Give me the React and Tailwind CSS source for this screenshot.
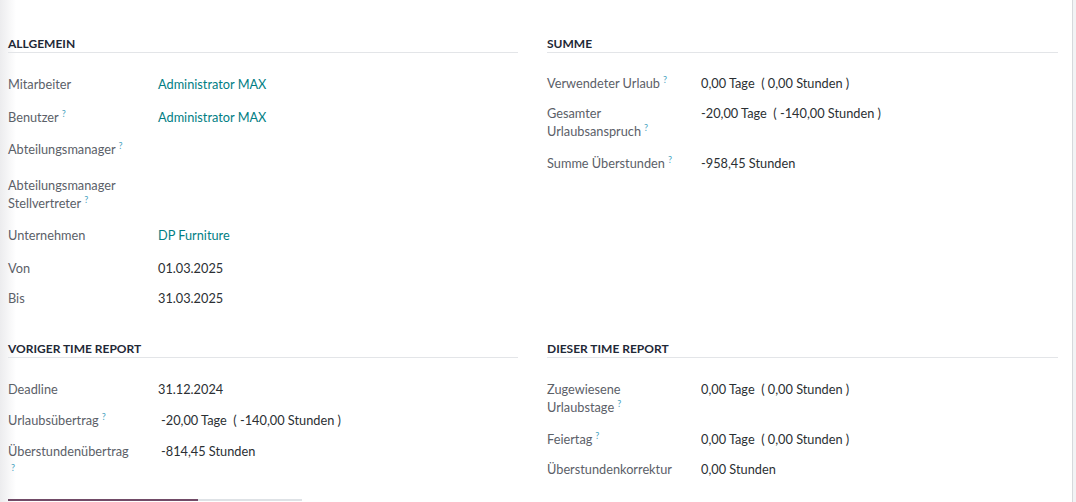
const FONT = { fontFamily: '"Lato", "Noto Sans", sans-serif' };

function Hint() {
  return <span className="relative -top-[5px] ml-[3px] text-[9px] leading-none text-[#4aa3bf]">?</span>;
}

function Header({ children }) {
  return (
    <div className="h-[18px] leading-[18px] text-[12px] font-bold text-[#1f2937] uppercase border-b border-[#e3e5e8]">
      {children}
    </div>
  );
}

function Row({ label, children, h, labelW = 'w-[150px]' }) {
  return (
    <div className={`flex ${h}`}>
      <div className={`${labelW} shrink-0 text-[#5b6068] leading-[18px]`}>{label}</div>
      <div className="text-[#2b2f33] leading-[18px] whitespace-pre">{children}</div>
    </div>
  );
}

function Link({ children }) {
  return <span className="text-[#017e84]">{children}</span>;
}

export default function App() {
  return (
    <div className="min-h-screen flex bg-[#f2f3f5] text-[12.75px]" style={FONT}>
      <div className="w-[1073px] min-h-screen border-r border-[#d6d8dc] bg-[linear-gradient(to_right,#ececee,#ffffff_16px)]">
        <div className="grid grid-cols-[510px_511px] gap-x-[29px] pl-2">
          {/* Allgemein */}
          <div className="pt-[35px]">
            <Header>Allgemein</Header>
            <div className="pt-[22px]">
              <Row label="Mitarbeiter" h="h-[33px]">
                <Link>Administrator MAX</Link>
              </Row>
              <Row label={<>Benutzer<Hint /></>} h="h-[32px]">
                <Link>Administrator MAX</Link>
              </Row>
              <Row label={<>Abteilungsmanager<Hint /></>} h="h-[36px]" />
              <Row label={<>Abteilungsmanager<br />Stellvertreter<Hint /></>} h="h-[50px]" />
              <Row label="Unternehmen" h="h-[33px]">
                <Link>DP Furniture</Link>
              </Row>
              <Row label="Von" h="h-[30px]">01.03.2025</Row>
              <Row label="Bis" h="h-[30px]">31.03.2025</Row>
            </div>
          </div>

          {/* Summe */}
          <div className="pt-[35px]">
            <Header>Summe</Header>
            <div className="pt-[21px]">
              <Row label={<>Verwendeter Urlaub<Hint /></>} h="h-[30px]" labelW="w-[154px]">
                0,00 Tage  ( 0,00 Stunden )
              </Row>
              <Row label={<>Gesamter<br />Urlaubsanspruch<Hint /></>} h="h-[50px]" labelW="w-[154px]">
                -20,00 Tage  ( -140,00 Stunden )
              </Row>
              <Row label={<>Summe Überstunden<Hint /></>} h="h-[30px]" labelW="w-[154px]">
                -958,45 Stunden
              </Row>
            </div>
          </div>

          {/* Voriger Time Report */}
          <div className="pt-[21px]">
            <Header>Voriger Time Report</Header>
            <div className="pt-[22px]">
              <Row label="Deadline" h="h-[31px]">31.12.2024</Row>
              <Row label={<>Urlaubsübertrag<Hint /></>} h="h-[31px]">
                <span className="ml-[3px]">-20,00 Tage  ( -140,00 Stunden )</span>
              </Row>
              <Row label={<>Überstundenübertrag<br /><span className="relative -top-[3px] ml-[3px] text-[9px] leading-none text-[#4aa3bf]">?</span></>} h="h-[43px]">
                <span className="ml-[3px]">-814,45 Stunden</span>
              </Row>
            </div>
            <div className="mt-[14px] flex w-[294px]">
              <div className="w-[190px] border-t-2 border-[#714b67]" />
              <div className="flex-1 border-t-2 border-[#dee2e6]" />
            </div>
          </div>

          {/* Dieser Time Report */}
          <div className="pt-[21px]">
            <Header>Dieser Time Report</Header>
            <div className="pt-[22px]">
              <Row label={<>Zugewiesene<br />Urlaubstage<Hint /></>} h="h-[50px]" labelW="w-[154px]">
                0,00 Tage  ( 0,00 Stunden )
              </Row>
              <Row label={<>Feiertag<Hint /></>} h="h-[30px]" labelW="w-[154px]">
                0,00 Tage  ( 0,00 Stunden )
              </Row>
              <Row label="Überstundenkorrektur" h="h-[30px]" labelW="w-[154px]">
                0,00 Stunden
              </Row>
            </div>
          </div>
        </div>
      </div>
    </div>
  );
}
